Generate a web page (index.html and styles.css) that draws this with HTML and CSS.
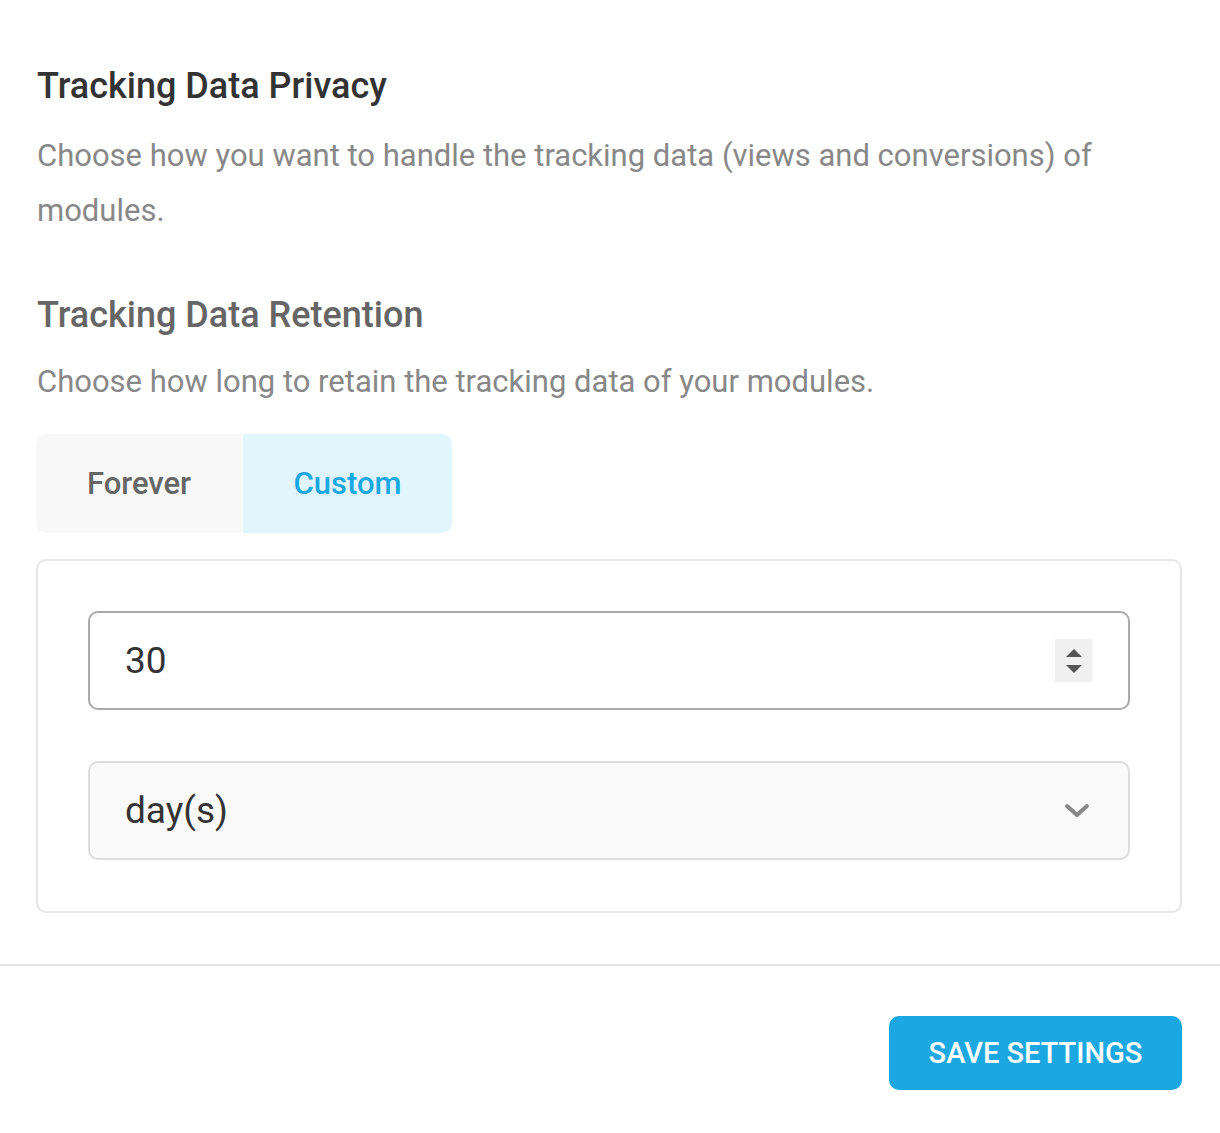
FILE: index.html
```html
<!DOCTYPE html>
<html lang="en">
<head>
  <meta charset="UTF-8">
  <title>Tracking Data Settings</title>
  <link rel="stylesheet" href="styles.css">
</head>
<body>
  <div class="settings">
    <div class="section">
      <h2>Tracking Data Privacy</h2>
      <p class="desc">Choose how you want to handle the tracking data (views and conversions) of modules.</p>
    </div>
    <div class="section">
      <h2 class="muted">Tracking Data Retention</h2>
      <p class="desc short">Choose how long to retain the tracking data of your modules.</p>
      <div class="tabs">
        <div class="tab">Forever</div>
        <div class="tab active">Custom</div>
      </div>
      <div class="tab-box">
        <div class="number-field">
          <span class="value">30</span>
          <span class="spinner">
            <svg width="20" height="30" viewBox="0 0 20 30"><path d="M2 11 L10 3 L18 11 Z" fill="#555"/><path d="M2 19 L18 19 L10 27 Z" fill="#555"/></svg>
          </span>
        </div>
        <div class="select-field">
          <span class="value">day(s)</span>
          <svg width="26" height="16" viewBox="0 0 26 16"><path d="M3 3 L13 12 L23 3" fill="none" stroke="#888" stroke-width="4" stroke-linecap="round" stroke-linejoin="round"/></svg>
        </div>
      </div>
    </div>
  </div>
  <div class="footer">
    <button class="save">SAVE SETTINGS</button>
  </div>
</body>
</html>
```

FILE: styles.css
```css
body {
  margin: 0;
  font-family: Roboto, "Liberation Sans", sans-serif;
  background: #fff;
}
.settings {
  padding: 64px 38px 51px 36px;
}
.section h2 {
  margin: 0 0 0 1px;
  font-size: 36px;
  font-weight: 500;
  line-height: 44px;
  color: #333;
}
.section h2.muted {
  color: #666;
}
.desc {
  margin: 20px 0 0 1px;
  font-size: 31px;
  line-height: 55px;
  color: #888;
}
.desc.short {
  margin-top: 17px;
}
.section + .section {
  margin-top: 55px;
}
.tabs {
  display: flex;
  gap: 1px;
  margin-top: 25px;
}
.tab {
  width: 206px;
  height: 99px;
  display: flex;
  align-items: center;
  justify-content: center;
  font-size: 31px;
  font-weight: 500;
  color: #666;
  background: #f8f8f8;
  border-radius: 10px 0 0 10px;
}
.tab.active {
  width: 209px;
  color: #17a8e3;
  background: #e1f5fd;
  border-radius: 0 10px 10px 0;
}
.tab-box {
  margin-top: 26px;
  border: 2px solid #e6e6e6;
  border-radius: 10px;
  padding: 50px 50px 51px;
  display: flex;
  flex-direction: column;
  gap: 51px;
}
.number-field,
.select-field {
  height: 95px;
  border: 2px solid #aaa;
  border-radius: 10px;
  display: flex;
  align-items: center;
  justify-content: space-between;
  padding: 0 36px 0 35px;
  font-size: 37px;
  color: #333;
}
.select-field {
  background: #fafafa;
  border-color: #ddd;
  padding-right: 38px;
}
.spinner {
  width: 37px;
  height: 43px;
  background: #f0f0f0;
  display: flex;
  align-items: center;
  justify-content: center;
}
.footer {
  border-top: 2px solid #e6e6e6;
  display: flex;
  justify-content: flex-end;
  padding: 50px 38px 40px;
}
.save {
  width: 293px;
  height: 74px;
  background: #1ba8e2;
  color: #fff;
  border: none;
  border-radius: 10px;
  font-family: Roboto, "Liberation Sans", sans-serif;
  font-size: 29px;
  font-weight: 500;
}
```
